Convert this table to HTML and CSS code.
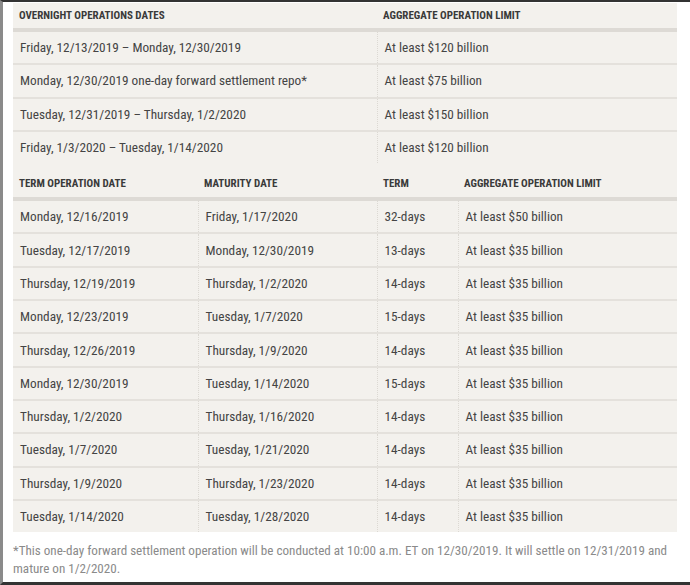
FILE: index.html
```html
<!DOCTYPE html>
<html>
<head>
<meta charset="utf-8">
<link rel="stylesheet" href="styles.css">
</head>
<body>
<div class="frame">
  <table class="ops ops-overnight">
    <colgroup><col class="c-a"><col class="c-b"></colgroup>
    <thead>
      <tr><th>Overnight Operations Dates</th><th>Aggregate Operation Limit</th></tr>
    </thead>
    <tbody>
      <tr><td>Friday, 12/13/2019 – Monday, 12/30/2019</td><td>At least $120 billion</td></tr>
      <tr><td>Monday, 12/30/2019 one-day forward settlement repo*</td><td>At least $75 billion</td></tr>
      <tr><td>Tuesday, 12/31/2019 – Thursday, 1/2/2020</td><td>At least $150 billion</td></tr>
      <tr class="last"><td>Friday, 1/3/2020 – Tuesday, 1/14/2020</td><td>At least $120 billion</td></tr>
    </tbody>
  </table>
  <table class="ops ops-term">
    <colgroup><col class="c-1"><col class="c-2"><col class="c-3"><col class="c-4"></colgroup>
    <thead>
      <tr><th>Term Operation Date</th><th>Maturity Date</th><th>Term</th><th>Aggregate Operation Limit</th></tr>
    </thead>
    <tbody>
      <tr><td>Monday, 12/16/2019</td><td>Friday, 1/17/2020</td><td>32-days</td><td>At least $50 billion</td></tr>
      <tr><td>Tuesday, 12/17/2019</td><td>Monday, 12/30/2019</td><td>13-days</td><td>At least $35 billion</td></tr>
      <tr><td>Thursday, 12/19/2019</td><td>Thursday, 1/2/2020</td><td>14-days</td><td>At least $35 billion</td></tr>
      <tr><td>Monday, 12/23/2019</td><td>Tuesday, 1/7/2020</td><td>15-days</td><td>At least $35 billion</td></tr>
      <tr><td>Thursday, 12/26/2019</td><td>Thursday, 1/9/2020</td><td>14-days</td><td>At least $35 billion</td></tr>
      <tr><td>Monday, 12/30/2019</td><td>Tuesday, 1/14/2020</td><td>15-days</td><td>At least $35 billion</td></tr>
      <tr><td>Thursday, 1/2/2020</td><td>Thursday, 1/16/2020</td><td>14-days</td><td>At least $35 billion</td></tr>
      <tr><td>Tuesday, 1/7/2020</td><td>Tuesday, 1/21/2020</td><td>14-days</td><td>At least $35 billion</td></tr>
      <tr><td>Thursday, 1/9/2020</td><td>Thursday, 1/23/2020</td><td>14-days</td><td>At least $35 billion</td></tr>
      <tr class="last"><td>Tuesday, 1/14/2020</td><td>Tuesday, 1/28/2020</td><td>14-days</td><td>At least $35 billion</td></tr>
    </tbody>
  </table>
  <p class="note">*This one-day forward settlement operation will be conducted at 10:00 a.m. ET on 12/30/2019. It will settle on 12/31/2019 and mature on 1/2/2020.</p>
</div>
</body>
</html>
```

FILE: styles.css
```css
html, body {
  margin: 0;
  padding: 0;
  background: #ffffff;
}
body {
  font-family: "Roboto Condensed", "Liberation Sans Narrow", Roboto, sans-serif;
  color: #444;
}
.frame {
  box-sizing: border-box;
  height: 585px;
  border-top: 2px solid #333;
  border-left: 3px solid #8a8a8a;
  border-bottom: 3px solid #333;
  padding: 1px 13px 0 10px;
}
.ops {
  width: 664px;
  border-collapse: collapse;
  table-layout: fixed;
  background: #f3f1ed;
}
.c-a { width: 364px; }
.c-b { width: 300px; }
.c-1 { width: 185px; }
.c-2 { width: 179px; }
.c-3 { width: 81px; }
.c-4 { width: 219px; }
.ops th {
  text-align: left;
  font-size: 11px;
  font-weight: 700;
  text-transform: uppercase;
  color: #3a3a3a;
  padding: 0 6px 0 6px;
  height: 25px;
  border-bottom: 4px solid #dddad5;
}
.ops-term th {
  height: 27px;
  padding-top: 7px;
}
.ops td {
  font-size: 13.25px;
  color: #444;
  padding: 0 6px 0 7px;
  height: 31.3px;
  border-bottom: 2px solid #e4e1dc;
  border-left: 1px dotted #dcd9d3;
}
.ops td:first-child {
  border-left: none;
}
.ops tr.last td {
  border-bottom: none;
}
.note {
  margin: 10px 0 0 0;
  font-size: 13.1px;
  line-height: 18px;
  color: #8a8a8a;
}
```
